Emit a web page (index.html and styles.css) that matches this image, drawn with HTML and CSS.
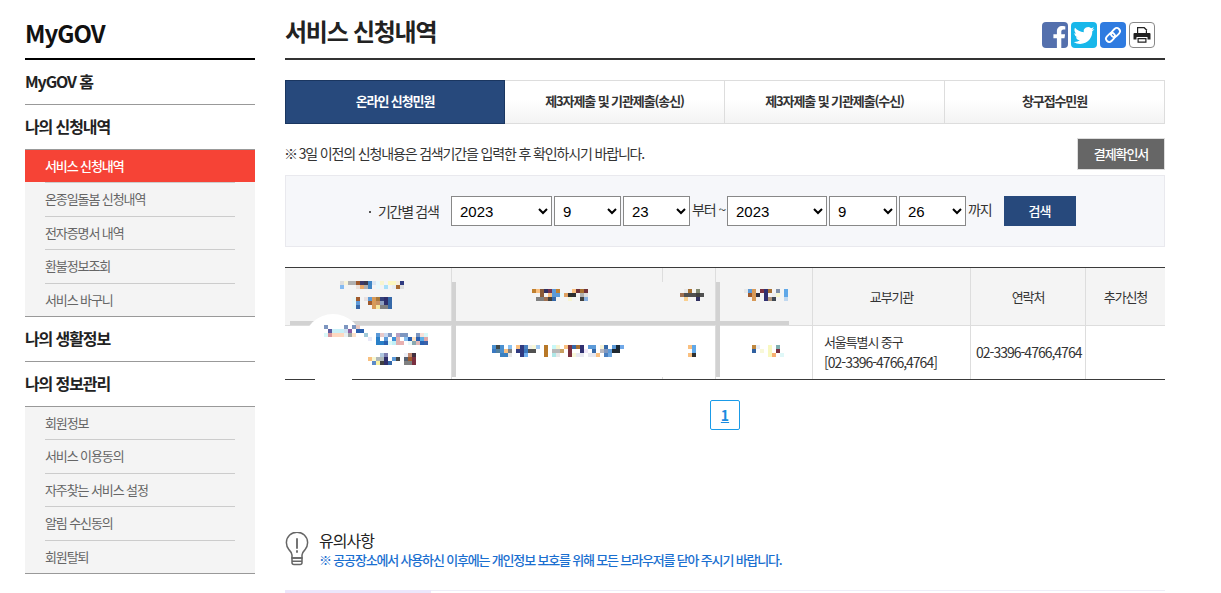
FILE: index.html
```html
<!DOCTYPE html>
<html lang="ko">
<head>
<meta charset="utf-8">
<title>서비스 신청내역</title>
<link rel="stylesheet" href="styles.css">
</head>
<body>
<div class="page">
  <aside class="side">
    <h2 class="side-title">MyGOV</h2>
    <a class="side-head" href="#">MyGOV 홈</a>
    <a class="side-head" href="#">나의 신청내역</a>
    <ul class="side-list">
      <li class="active"><a href="#">서비스 신청내역</a></li>
      <li><a href="#">온종일돌봄 신청내역</a></li>
      <li><a href="#">전자증명서 내역</a></li>
      <li><a href="#">환불정보조회</a></li>
      <li><a href="#">서비스 바구니</a></li>
    </ul>
    <a class="side-head" href="#">나의 생활정보</a>
    <a class="side-head" href="#">나의 정보관리</a>
    <ul class="side-list">
      <li><a href="#">회원정보</a></li>
      <li><a href="#">서비스 이용동의</a></li>
      <li><a href="#">자주찾는 서비스 설정</a></li>
      <li><a href="#">알림 수신동의</a></li>
      <li><a href="#">회원탈퇴</a></li>
    </ul>
  </aside>
  <main class="main">
    <header class="main-head">
      <h1 class="main-title">서비스 신청내역</h1>
      <div class="share">
        <a class="share-btn fb" href="#"><svg width="26" height="26" viewBox="-1 0 26 26"><path fill="#fff" d="M18.3 26V16.3h3.2l.6-4h-3.8V9.800c0-1.100.5-2.200 2.300-2.200h1.700V4.200s-1.600-.3-3.100-.3c-3.200 0-5.300 1.900-5.300 5.400v3h-3.500v4h3.500V26z"/></svg></a>
        <a class="share-btn tw" href="#"><svg width="26" height="26" viewBox="-3 -3.500 30 30"><path fill="#fff" d="M23.953 4.57a10 10 0 01-2.825.775 4.958 4.958 0 002.163-2.723c-.951.555-2.005.959-3.127 1.184a4.92 4.92 0 00-8.384 4.482C7.69 8.095 4.067 6.13 1.64 3.162a4.822 4.822 0 00-.666 2.475c0 1.71.87 3.213 2.188 4.096a4.904 4.904 0 01-2.228-.616v.06a4.923 4.923 0 003.946 4.827 4.996 4.996 0 01-2.212.085 4.936 4.936 0 004.604 3.417 9.867 9.867 0 01-6.102 2.105c-.39 0-.779-.023-1.17-.067a13.995 13.995 0 007.557 2.209c9.053 0 13.998-7.496 13.998-13.985 0-.21 0-.42-.015-.63A9.935 9.935 0 0024 4.59z"/></svg></a>
        <a class="share-btn ln" href="#"><svg width="26" height="26" viewBox="0 0 26 26"><g fill="none" stroke="#fff" stroke-width="1.800" transform="rotate(-45 13 13)"><rect x="4.500" y="9.800" width="10" height="6.400" rx="3.200"/><rect x="11.500" y="9.800" width="10" height="6.400" rx="3.200"/></g></svg></a>
        <a class="share-btn pr" href="#"><svg width="24" height="24" viewBox="0 0 24 24"><path fill="#222" d="M7 4h7.500L17 6.500V10H7z"/><path fill="#fff" d="M8.200 5.200h5.600l2 2V10H8.200z"/><path fill="#222" d="M4.500 10h15a1 1 0 0 1 1 1v5.500h-3V14h-11v2.500h-3V11a1 1 0 0 1 1-1z"/><path fill="#222" d="M7.500 15h9v4.800h-9zM8.700 16.200v2.400h6.600v-2.400z" fill-rule="evenodd"/></svg></a>
      </div>
    </header>

    <nav class="tabs">
      <a class="tab on" href="#">온라인 신청민원</a>
      <a class="tab" href="#">제3자제출 및 기관제출(송신)</a>
      <a class="tab" href="#">제3자제출 및 기관제출(수신)</a>
      <a class="tab" href="#">창구접수민원</a>
    </nav>

    <div class="notice">
      <p class="notice-text"><span class="mark">※</span> 3일 이전의 신청내용은 검색기간을 입력한 후 확인하시기 바랍니다.</p>
      <a class="receipt" href="#">결제확인서</a>
    </div>

    <form class="search">
      <span class="search-label">기간별 검색</span>
      <select class="sel sel-y"><option>2023</option></select>
      <select class="sel sel-m"><option>9</option></select>
      <select class="sel sel-m"><option>23</option></select>
      <span class="range-a">부터 ~</span>
      <select class="sel sel-y2"><option>2023</option></select>
      <select class="sel sel-m2"><option>9</option></select>
      <select class="sel sel-m"><option>26</option></select>
      <span class="range-b">까지</span>
      <button class="search-btn" type="button">검색</button>
    </form>

    <div class="table-wrap">
      <table class="tbl">
        <thead>
          <tr>
            <th class="c1"></th><th class="c2"></th><th class="c3"></th><th class="c4"></th>
            <th class="c5">교부기관</th><th class="c6">연락처</th><th class="c7">추가신청</th>
          </tr>
        </thead>
        <tbody>
          <tr>
            <td></td><td></td><td></td><td></td>
            <td class="org">서울특별시 중구<br><span class="num">[02-3396-4766,4764]</span></td>
            <td class="tel"><span class="num">02-3396-4766,4764</span></td>
            <td></td>
          </tr>
        </tbody>
      </table>
      <svg class="mosaic" width="880" height="114" viewBox="285 267 880 114">
        <rect class="raw" x="660" y="282" width="5" height="39" fill="#f4f4f4"/>
        <rect class="raw" x="660" y="326" width="5" height="51" fill="#fff"/>
        <rect class="raw" x="452" y="282" width="4" height="95" fill="#d2d2d2"/>
        <rect class="raw" x="716" y="282" width="4" height="95" fill="#d2d2d2"/>
        <rect class="raw" x="290" y="321" width="499" height="4" fill="#d2d2d2"/>
        <ellipse cx="333" cy="342" rx="29" ry="28" fill="#fff"/>
        <rect class="raw" x="315" y="360" width="37" height="21" fill="#fff"/>
        <!-- row 1 col 1 -->
        <rect x="340" y="281" fill="#ddd"/><rect x="344" y="281" fill="#f8f4d8"/><rect x="348" y="281" fill="#b0b0b0"/><rect x="352" y="281" fill="#b0b0b0"/><rect x="356" y="281" fill="#a05a2c"/><rect x="360" y="281" fill="#3a3a6a"/><rect x="364" y="281" fill="#3a3a50"/><rect x="368" y="281" fill="#3d85c6"/><rect x="372" y="281" fill="#d9e6f2"/><rect x="376" y="281" fill="#e8f8fb"/><rect x="380" y="281" fill="#f8f5d0"/><rect x="388" y="281" fill="#fcf8c0"/><rect x="392" y="281" fill="#fcf8c0"/><rect x="396" y="281" fill="#f5efe0"/><rect x="400" y="281" fill="#2e3a80"/>
        <rect x="340" y="285" fill="#85baf0"/><rect x="356" y="285" fill="#eadfd8"/><rect x="360" y="285" fill="#e8a868"/><rect x="364" y="285" fill="#b0b0b0"/><rect x="368" y="285" fill="#3d85c6"/><rect x="376" y="285" fill="#e8f8fb"/><rect x="384" y="285" fill="#a8e0f8"/><rect x="392" y="285" fill="#e8eef0"/><rect x="396" y="285" fill="#a86a30"/><rect x="400" y="285" fill="#ddd"/>
        <rect x="352" y="297" fill="#e8f6f6"/><rect x="356" y="297" fill="#a05a2c"/><rect x="364" y="297" fill="#e8e0e0"/><rect x="368" y="297" fill="#5c9ad8"/><rect x="372" y="297" fill="#d89a58"/><rect x="376" y="297" fill="#a87838"/><rect x="380" y="297" fill="#34407a"/><rect x="384" y="297" fill="#2e2e6a"/><rect x="388" y="297" fill="#3568a8"/>
        <rect x="352" y="301" fill="#e8f6f6"/><rect x="356" y="301" fill="#5c9ad8"/><rect x="368" y="301" fill="#a05a2c"/><rect x="372" y="301" fill="#d89a58"/><rect x="376" y="301" fill="#c89060"/><rect x="380" y="301" fill="#8ea0c0"/><rect x="384" y="301" fill="#2e2e6a"/><rect x="388" y="301" fill="#3568a8"/>
        <rect x="352" y="305" fill="#e8f6f6"/><rect x="356" y="305" fill="#3568a8"/><rect x="372" y="305" fill="#d89a58"/><rect x="376" y="305" fill="#f5e8a0"/><rect x="380" y="305" fill="#808080"/><rect x="384" y="305" fill="#808080"/><rect x="388" y="305" fill="#3568a8"/>
        <!-- row 2 col 1 -->
        <rect x="324" y="325" fill="#7d96c0"/><rect x="344" y="325" fill="#7d96c0"/><rect x="352" y="325" fill="#7d96c0"/><rect x="356" y="325" fill="#e8c8c0"/>
        <rect x="328" y="329" fill="#5a5aa0"/><rect x="332" y="329" fill="#c8f0f8"/><rect x="336" y="329" fill="#c8f0f8"/><rect x="340" y="329" fill="#c8f0f8"/><rect x="344" y="329" fill="#d0e0f0"/><rect x="348" y="329" fill="#8a5aa0"/><rect x="356" y="329" fill="#2a60b0"/><rect x="360" y="329" fill="#2a60b0"/>
        <rect x="324" y="333" fill="#d8f8f8"/><rect x="328" y="333" fill="#d898a0"/><rect x="332" y="333" fill="#fdd8c0"/><rect x="336" y="333" fill="#fdd8c0"/><rect x="340" y="333" fill="#fdd8c0"/><rect x="344" y="333" fill="#e8f0f0"/><rect x="348" y="333" fill="#a0a8a8"/><rect x="352" y="333" fill="#fde0c8"/><rect x="364" y="333" fill="#a0c8d8"/><rect x="376" y="333" fill="#5c9ad8"/><rect x="380" y="333" fill="#e8c8c8"/><rect x="384" y="333" fill="#c8d8f0"/><rect x="388" y="333" fill="#7d96c0"/><rect x="396" y="333" fill="#b8a0c0"/><rect x="400" y="333" fill="#7d96c0"/><rect x="404" y="333" fill="#7d96c0"/><rect x="416" y="333" fill="#7d96c0"/><rect x="420" y="333" fill="#f8e0d8"/><rect x="424" y="333" fill="#d8f8f8"/>
        <rect x="368" y="337" fill="#e8e8f8"/><rect x="376" y="337" fill="#2a80c8"/><rect x="384" y="337" fill="#5c9ad8"/><rect x="392" y="337" fill="#3d90d8"/><rect x="396" y="337" fill="#e0b0b0"/><rect x="404" y="337" fill="#88c0f0"/><rect x="408" y="337" fill="#2a60b0"/><rect x="412" y="337" fill="#fde0c0"/><rect x="416" y="337" fill="#2a60b0"/><rect x="420" y="337" fill="#5cb0e8"/><rect x="424" y="337" fill="#e0a8a8"/>
        <rect x="376" y="341" fill="#2a80c8"/><rect x="380" y="341" fill="#2a80c8"/><rect x="384" y="341" fill="#2a60b0"/><rect x="388" y="341" fill="#d8f8f8"/><rect x="392" y="341" fill="#c0f0f8"/><rect x="396" y="341" fill="#e0b0b0"/><rect x="400" y="341" fill="#e8b0b0"/><rect x="408" y="341" fill="#e8f8f8"/><rect x="412" y="341" fill="#88a8b0"/><rect x="416" y="341" fill="#e0b8b8"/><rect x="420" y="341" fill="#2a60b0"/><rect x="424" y="341" fill="#3a60a8"/>
        <rect x="380" y="353" fill="#b0c8e0"/><rect x="384" y="353" fill="#8080b0"/><rect x="404" y="353" fill="#eef0f8"/><rect x="408" y="353" fill="#c08870"/><rect x="412" y="353" fill="#403040"/>
        <rect x="368" y="357" fill="#f8c080"/><rect x="372" y="357" fill="#f8f8d0"/><rect x="376" y="357" fill="#b0b8b8"/><rect x="380" y="357" fill="#b0b8b8"/><rect x="384" y="357" fill="#2e2e6a"/><rect x="392" y="357" fill="#5c9ad8"/><rect x="396" y="357" fill="#454545"/><rect x="404" y="357" fill="#556070"/><rect x="408" y="357" fill="#a05a2c"/><rect x="412" y="357" fill="#7a3040"/>
        <rect x="372" y="361" fill="#5c8ac8"/><rect x="376" y="361" fill="#f8f0a0"/><rect x="380" y="361" fill="#404040"/><rect x="384" y="361" fill="#2e2e6a"/><rect x="388" y="361" fill="#3568a8"/><rect x="404" y="361" fill="#808080"/><rect x="408" y="361" fill="#808080"/><rect x="412" y="361" fill="#7a3040"/>
        <!-- col 2 -->
        <rect x="532" y="289" fill="#c08030"/><rect x="536" y="289" fill="#fac080"/><rect x="540" y="289" fill="#8a5a38"/><rect x="544" y="289" fill="#303060"/><rect x="548" y="289" fill="#703050"/><rect x="552" y="289" fill="#5c9ad8"/><rect x="556" y="289" fill="#c08030"/><rect x="572" y="289" fill="#fac080"/><rect x="576" y="289" fill="#703038"/><rect x="580" y="289" fill="#a87030"/><rect x="584" y="289" fill="#703038"/>
        <rect x="540" y="293" fill="#8a5a38"/><rect x="548" y="293" fill="#fac080"/><rect x="552" y="293" fill="#5c9ad8"/><rect x="556" y="293" fill="#5c9ad8"/><rect x="560" y="293" fill="#e8f8f8"/><rect x="564" y="293" fill="#e0a060"/><rect x="568" y="293" fill="#303030"/><rect x="572" y="293" fill="#303030"/><rect x="580" y="293" fill="#b0b0b0"/><rect x="584" y="293" fill="#ddd"/>
        <rect x="536" y="297" fill="#808080"/><rect x="540" y="297" fill="#808080"/><rect x="544" y="297" fill="#a07050"/><rect x="548" y="297" fill="#404040"/><rect x="552" y="297" fill="#3568a8"/><rect x="568" y="297" fill="#f8f4d0"/><rect x="580" y="297" fill="#404040"/><rect x="584" y="297" fill="#88b0e0"/>
        <rect x="492" y="345" fill="#4a90d0"/><rect x="496" y="345" fill="#404848"/><rect x="500" y="345" fill="#4a90d0"/><rect x="508" y="345" fill="#88c0f0"/><rect x="516" y="345" fill="#fac080"/><rect x="520" y="345" fill="#303a80"/><rect x="524" y="345" fill="#4a80c0"/><rect x="528" y="345" fill="#f0f0e8"/><rect x="532" y="345" fill="#f8f8d8"/><rect x="536" y="345" fill="#a0c8f0"/><rect x="544" y="345" fill="#b87828"/><rect x="552" y="345" fill="#c8f8f8"/><rect x="556" y="345" fill="#f8f4d0"/><rect x="564" y="345" fill="#fac080"/><rect x="568" y="345" fill="#7a3040"/><rect x="572" y="345" fill="#3568a8"/><rect x="576" y="345" fill="#a87030"/><rect x="580" y="345" fill="#303070"/><rect x="588" y="345" fill="#5c9ad8"/><rect x="592" y="345" fill="#5c9ad8"/><rect x="600" y="345" fill="#f8f4d8"/><rect x="604" y="345" fill="#3568a8"/><rect x="612" y="345" fill="#5c9ad8"/><rect x="616" y="345" fill="#1a2a38"/><rect x="620" y="345" fill="#70a8e8"/>
        <rect x="492" y="349" fill="#3a78c0"/><rect x="496" y="349" fill="#5080a0"/><rect x="500" y="349" fill="#4a90d0"/><rect x="504" y="349" fill="#fac080"/><rect x="508" y="349" fill="#808080"/><rect x="516" y="349" fill="#303a80"/><rect x="520" y="349" fill="#303a80"/><rect x="524" y="349" fill="#3a78c0"/><rect x="528" y="349" fill="#505050"/><rect x="532" y="349" fill="#505050"/><rect x="544" y="349" fill="#b87828"/><rect x="552" y="349" fill="#b8b8b8"/><rect x="556" y="349" fill="#b8b8b8"/><rect x="560" y="349" fill="#c8a060"/><rect x="568" y="349" fill="#7a3040"/><rect x="580" y="349" fill="#303070"/><rect x="584" y="349" fill="#f0e8f8"/><rect x="592" y="349" fill="#3568a8"/><rect x="600" y="349" fill="#b8b8c0"/><rect x="604" y="349" fill="#8098c0"/><rect x="608" y="349" fill="#5c9ad8"/><rect x="612" y="349" fill="#202830"/><rect x="616" y="349" fill="#202830"/>
        <rect x="500" y="353" fill="#3a80c0"/><rect x="504" y="353" fill="#3a80c0"/><rect x="508" y="353" fill="#e8e8e8"/><rect x="520" y="353" fill="#303a80"/><rect x="524" y="353" fill="#70b0f0"/><rect x="544" y="353" fill="#b87828"/><rect x="552" y="353" fill="#b0e8e8"/><rect x="556" y="353" fill="#e8e8e8"/><rect x="568" y="353" fill="#7a3040"/><rect x="572" y="353" fill="#f8f8d8"/><rect x="576" y="353" fill="#e8e8f0"/><rect x="580" y="353" fill="#e8e8f0"/><rect x="588" y="353" fill="#e8e8f0"/><rect x="592" y="353" fill="#e8e8f0"/><rect x="596" y="353" fill="#fac080"/><rect x="604" y="353" fill="#4a80c0"/><rect x="608" y="353" fill="#70a8e0"/>
        <!-- col 3 -->
        <rect x="684" y="289" fill="#e8e8e8"/><rect x="688" y="289" fill="#a87030"/><rect x="696" y="289" fill="#808870"/>
        <rect x="680" y="293" fill="#a07050"/><rect x="684" y="293" fill="#505050"/><rect x="688" y="293" fill="#505050"/><rect x="692" y="293" fill="#505050"/><rect x="696" y="293" fill="#404040"/><rect x="700" y="293" fill="#505050"/>
        <rect x="684" y="297" fill="#fad090"/><rect x="696" y="297" fill="#303060"/>
        <rect x="688" y="345" fill="#fac080"/><rect x="692" y="345" fill="#60a8e8"/><rect x="692" y="349" fill="#60a8e8"/><rect x="688" y="353" fill="#fac080"/><rect x="692" y="353" fill="#303030"/>
        <!-- col 4 -->
        <rect x="744" y="289" fill="#e8e8e8"/><rect x="748" y="289" fill="#5c9ad8"/><rect x="752" y="289" fill="#d89a58"/><rect x="760" y="289" fill="#7a3040"/><rect x="764" y="289" fill="#303070"/><rect x="768" y="289" fill="#a87030"/><rect x="776" y="289" fill="#8090a8"/><rect x="784" y="289" fill="#60a8e8"/>
        <rect x="748" y="293" fill="#a05a2c"/><rect x="752" y="293" fill="#d89a58"/><rect x="756" y="293" fill="#303040"/><rect x="764" y="293" fill="#303070"/><rect x="772" y="293" fill="#eee"/><rect x="776" y="293" fill="#f8f8d0"/><rect x="784" y="293" fill="#60a8e8"/>
        <rect x="752" y="297" fill="#d89a58"/><rect x="764" y="297" fill="#303070"/><rect x="768" y="297" fill="#b09880"/><rect x="772" y="297" fill="#404850"/><rect x="784" y="297" fill="#c0d8f0"/>
        <rect x="752" y="345" fill="#c08840"/><rect x="756" y="345" fill="#e8eef8"/><rect x="768" y="345" fill="#f8f8c0"/><rect x="776" y="345" fill="#80b0b0"/>
        <rect x="752" y="349" fill="#3060a0"/><rect x="760" y="349" fill="#f8f8d8"/><rect x="768" y="349" fill="#f8f8c0"/><rect x="776" y="349" fill="#7a3040"/>
        <rect x="768" y="353" fill="#f8f8c0"/><rect x="772" y="353" fill="#f8b070"/><rect x="780" y="353" fill="#e0f8f8"/>
      </svg>
    </div>

    <div class="pager"><a class="page-num" href="#">1</a></div>

    <section class="caution">
      <svg class="bulb" width="24" height="36" viewBox="0 0 24 36">
        <g fill="none" stroke="#666" stroke-width="1.500" stroke-linecap="round">
          <path d="M7 26v-3c0-2.200-1.300-3.500-3-5.300A10.600 10.600 0 1 1 20 17.700c-1.700 1.800-3 3.100-3 5.300v3z"/>
          <path d="M7 26h10v4.500c0 1-.8 2-2 2H9c-1.200 0-2-1-2-2zM7 29.300h10"/>
          <path d="M12 7v9M12 19v1" stroke-width="1.800"/>
        </g>
      </svg>
      <div class="caution-body">
        <h3 class="caution-title">유의사항</h3>
        <p class="caution-text">※ 공공장소에서 사용하신 이후에는 개인정보 보호를 위해 모든 브라우저를 닫아 주시기 바랍니다.</p>
      </div>
    </section>

    <div class="strip"><span class="strip-tab"></span></div>
  </main>
</div>
</body>
</html>
```

FILE: styles.css
```css
* { box-sizing: border-box; }
html, body { margin: 0; padding: 0; height: 593px; overflow: hidden; background: #fff; }
body { font-family: "Noto Sans CJK KR", "Noto Sans", sans-serif; color: #333; letter-spacing: -1.1px; font-size: 13px; }
a { color: inherit; text-decoration: none; }
ul, p, h1, h2, h3 { margin: 0; padding: 0; list-style: none; }

.page { display: flex; gap: 30px; padding-left: 25px; }

/* sidebar */
.side { width: 230px; flex: none; }
.side-title { height: 60px; border-bottom: 2px solid #000; font-size: 24px; font-weight: 700; line-height: 66px; color: #111; letter-spacing: -1px; }
.side-head { display: block; height: 45px; line-height: 42px; border-bottom: 1px solid #999; font-size: 16px; font-weight: 700; color: #222; }
.side-list { background: #f4f4f4; border-bottom: 1px solid #999; height: 167px; }
.side-list a { display: block; height: 32.4px; line-height: 31px; padding-left: 20px; color: #666; font-size: 13px; }
.side-list li:not(:last-child)::after { content: ""; display: block; height: 1px; margin: 0 20px; background: #ccc; }
.side-list .active a { background: #f64336; color: #fff; font-weight: 500; }

/* header */
.main { width: 880px; flex: none; }
.main-head { height: 60px; border-bottom: 2px solid #333; display: flex; justify-content: space-between; padding: 0 10px 0 0; }
.main-title { font-size: 24px; font-weight: 700; line-height: 62px; color: #222; letter-spacing: -1.25px; }
.share { display: flex; gap: 3px; padding-top: 22px; }
.share-btn { width: 26px; height: 26px; border-radius: 4px; overflow: hidden; display: block; }
.fb { background: #5470ad; }
.tw { background: #18b7ea; }
.ln { background: #2f7be0; }
.pr { background: #fff; border: 1px solid #888; }
.share-btn svg { display: block; }

/* tabs */
.tabs { display: grid; grid-template-columns: repeat(4, 1fr); margin-top: 20px; height: 44px; }
.tab { display: flex; align-items: center; justify-content: center; height: 44px; padding-bottom: 3px; border: 1px solid #ddd; border-left-width: 0; background: linear-gradient(#fff 45%, #f3f3f3); font-weight: 700; color: #333; }
.tab.on { background: #27497c; border: 1px solid #1a3660; color: #fff; }

/* notice */
.notice { display: flex; justify-content: space-between; align-items: center; margin-top: 14px; height: 32px; }
.notice-text { font-size: 14px; color: #333; padding-bottom: 2px; letter-spacing: -1.15px; }
.mark { margin: 0 -1px; }
.receipt { width: 88px; height: 32px; line-height: 30px; text-align: center; background: #666; border: 1px solid #ddd; color: #fff; font-weight: 500; }

/* search */
.search { display: flex; align-items: center; margin-top: 5px; height: 72px; padding-left: 80px; background: #f6f7fa; border: 1px solid #e9e9ee; font-size: 14px; }
.search-label { position: relative; width: 85px; padding-left: 12px; letter-spacing: -1.3px; }
.search-label::before { content: ""; position: absolute; left: 3px; top: 10px; width: 2px; height: 2px; background: #555; }
.sel { height: 30px; margin-right: 2px; padding: 0 0 0 4px; font-family: "Liberation Sans", Arial, sans-serif; font-size: 15px; letter-spacing: 0; color: #000; background-color: #fff; border: 1px solid #888; }
.sel-y { width: 101px; }
.sel-y2 { width: 100px; }
.sel-m { width: 67px; }
.sel-m2 { width: 68px; }
.range-a { width: 35px; padding-bottom: 4px; }
.range-b { padding-bottom: 4px; }
.search-btn { width: 72px; height: 30px; margin-left: 12px; padding-bottom: 2px; border: 0; background: #27497c; color: #fff; font: 500 13px "Noto Sans CJK KR", sans-serif; letter-spacing: -1px; }

/* table */
.table-wrap { position: relative; margin-top: 20px; height: 113px; }
.tbl { width: 880px; table-layout: fixed; border-collapse: separate; border-spacing: 0; border-top: 1px solid #3a3a3a; border-bottom: 1px solid #3a3a3a; }
.tbl th { height: 58px; background: #f4f4f4; border-left: 1px solid #ddd; border-bottom: 1px solid #ddd; font-weight: 400; color: #333; font-size: 13px; padding: 0; }
.tbl td { height: 53px; border-left: 1px solid #ddd; padding: 0; color: #333; font-size: 13px; line-height: 20px; }
.tbl th:first-child, .tbl td:first-child { border-left: 0; }
.c1 { width: 166px; }
.c2 { width: 211px; }
.c3 { width: 53px; }
.c4 { width: 97px; }
.c5 { width: 158px; }
.c6 { width: 115px; }
.c7 { width: 80px; }
.tbl .org { padding: 0 0 1px 11px; }
.tbl .tel { padding-left: 5px; white-space: nowrap; }
.num { font-size: 14px; letter-spacing: -1px; }
.mosaic { position: absolute; left: 0; top: 0; display: block; }
.mosaic rect:not(.raw) { width: 4px; height: 4px; }

/* pager */
.pager { display: flex; justify-content: center; margin-top: 20px; }
.page-num { width: 30px; height: 30px; line-height: 29px; text-align: center; border: 1px solid #1a9be8; border-radius: 2px; color: #1a8ce0; font-weight: 700; font-size: 14px; text-decoration: underline; letter-spacing: 0; }

/* caution */
.caution { display: flex; gap: 10px; margin-top: 101px; height: 59px; }
.bulb { display: block; flex: none; margin-top: 1px; }
.caution-body { margin-top: -1px; }
.caution-title { font-size: 16px; font-weight: 400; line-height: 20px; color: #222; letter-spacing: -1px; }
.caution-text { font-size: 13px; font-weight: 500; line-height: 20px; color: #1a6fd0; letter-spacing: -1.17px; }
.strip { height: 3px; border-top: 1px solid #eeeef8; position: relative; }
.strip-tab { display: block; width: 146px; height: 3px; margin-top: -1px; background: #ece6fb; }
```
